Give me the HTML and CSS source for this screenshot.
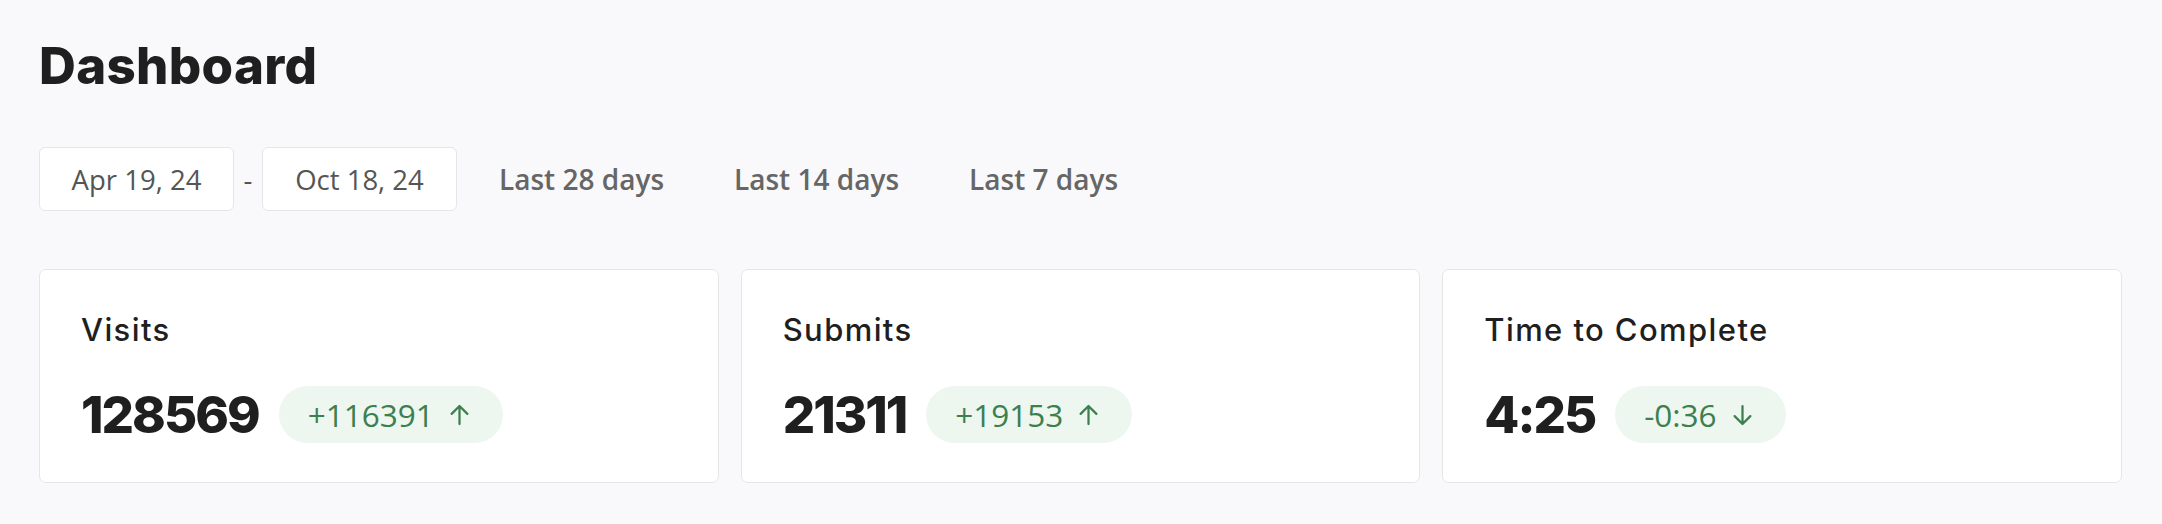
FILE: index.html
```html
<!DOCTYPE html>
<html lang="en">
<head>
<meta charset="utf-8">
<title>Dashboard</title>
<link rel="stylesheet" href="styles.css">
</head>
<body>
<main class="page">
  <h1 class="title">Dashboard</h1>
  <div class="range">
    <div class="date-box">Apr 19, 24</div>
    <span class="dash">-</span>
    <div class="date-box">Oct 18, 24</div>
    <div class="presets">
      <button class="preset">Last 28 days</button>
      <button class="preset">Last 14 days</button>
      <button class="preset">Last 7 days</button>
    </div>
  </div>
  <section class="cards">
    <article class="card">
      <h2 class="card-label">Visits</h2>
      <div class="card-row">
        <span class="card-value">128569</span>
        <span class="badge">+116391
          <svg class="arrow" viewBox="0 0 24 24"><path d="M12 20V4M5 11l7-7 7 7"/></svg>
        </span>
      </div>
    </article>
    <article class="card">
      <h2 class="card-label">Submits</h2>
      <div class="card-row">
        <span class="card-value">21311</span>
        <span class="badge">+19153
          <svg class="arrow" viewBox="0 0 24 24"><path d="M12 20V4M5 11l7-7 7 7"/></svg>
        </span>
      </div>
    </article>
    <article class="card">
      <h2 class="card-label">Time to Complete</h2>
      <div class="card-row">
        <span class="card-value">4:25</span>
        <span class="badge">-0:36
          <svg class="arrow" viewBox="0 0 24 24"><path d="M12 4v16M5 13l7 7 7-7"/></svg>
        </span>
      </div>
    </article>
  </section>
</main>
</body>
</html>
```
FILE: styles.css
```css
html, body {
  margin: 0;
  padding: 0;
  background: #f9f9fb;
}
.page {
  padding: 30px 40px 0 39px;
  font-family: "Open Sans", "Noto Sans", sans-serif;
}
.title {
  margin: 0;
  font-family: Inter, "Liberation Sans", sans-serif;
  font-weight: 800;
  font-size: 51px;
  line-height: 72px;
  letter-spacing: 0.3px;
  color: #1f1f1f;
}
.range {
  display: flex;
  align-items: center;
  margin-top: 45px;
  height: 64px;
}
.date-box {
  box-sizing: border-box;
  width: 195px;
  height: 64px;
  display: flex;
  align-items: center;
  justify-content: center;
  background: #fff;
  border: 1.5px solid #e6e6e8;
  border-radius: 6px;
  font-size: 27.5px;
  color: #555;
}
.dash {
  width: 28px;
  text-align: center;
  font-size: 27.5px;
  color: #555;
}
.presets {
  display: flex;
  gap: 2px;
  margin-left: 8px;
}
.preset {
  border: 0;
  background: transparent;
  padding: 0 34px;
  font-family: "Open Sans", "Noto Sans", sans-serif;
  font-weight: 600;
  font-size: 28px;
  color: #666;
}
.cards {
  display: grid;
  grid-template-columns: repeat(3, 1fr);
  gap: 22px;
  margin-top: 58px;
}
.card {
  box-sizing: border-box;
  height: 214px;
  padding: 36px 41px 0;
  background: #fff;
  border: 1.5px solid #e6e6e8;
  border-radius: 7px;
}
.card-label {
  margin: 0;
  font-family: Inter, "Liberation Sans", sans-serif;
  font-weight: 500;
  font-size: 31px;
  line-height: 48px;
  letter-spacing: 1.4px;
  color: #1f1f1f;
}
.card-row {
  display: flex;
  align-items: center;
  gap: 20px;
  margin-top: 30px;
}
.card-value {
  font-family: Inter, "Liberation Sans", sans-serif;
  font-weight: 800;
  font-size: 51px;
  letter-spacing: -2px;
  color: #1f1f1f;
}
.badge {
  display: inline-flex;
  align-items: center;
  gap: 12px;
  height: 57px;
  padding: 0 30px 0 29px;
  border-radius: 29px;
  background: #edf7ef;
  color: #3d7f4f;
  font-size: 31.5px;
}
.arrow {
  width: 27px;
  height: 28px;
  fill: none;
  stroke: #3d7f4f;
  stroke-width: 2;
  stroke-linecap: round;
  stroke-linejoin: round;
}
```
